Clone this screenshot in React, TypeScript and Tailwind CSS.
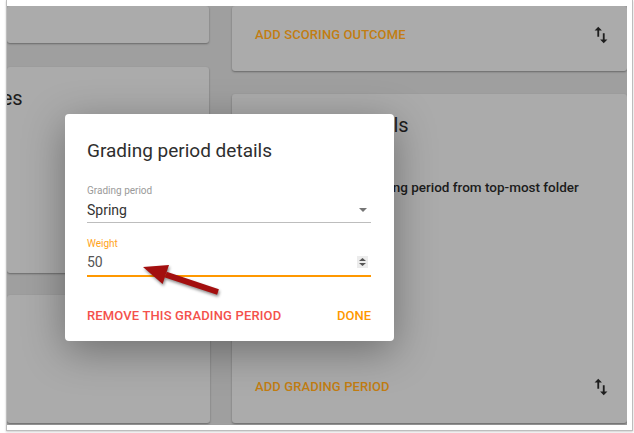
import React from "react";

function SwapIcon() {
  return (
    <svg width="22" height="22" viewBox="0 0 24 24" className="shrink-0">
      <path
        d="M16 17.01V10h-2v7.01h-3L15 21l4-3.99h-3zM9 3L5 6.99h3V14h2V6.99h3L9 3z"
        fill="#1e1e1e"
      />
    </svg>
  );
}

function Card({ className = "", children }: { className?: string; children?: React.ReactNode }) {
  return (
    <div className={`bg-[#ababab] rounded-[3px] shadow-[0_1px_2px_rgba(0,0,0,0.35)] ${className}`}>
      {children}
    </div>
  );
}

function PointerArrow() {
  // annotation arrow drawn over the screenshot
  return (
    <svg
      className="absolute left-0 top-0 pointer-events-none drop-shadow-[1px_2px_1.5px_rgba(0,0,0,0.45)]"
      width="634"
      height="433"
      viewBox="0 0 634 433"
    >
      <polygon points="218.9,289.2 217.1,294.8 164.9,277.4 166.7,271.8" fill="#a30f0f" />
      <polygon points="143,267 169,265 162.6,284.1" fill="#a30f0f" />
    </svg>
  );
}

export default function App() {
  return (
    <div
      className="relative w-[634px] h-[433px] bg-white overflow-hidden"
      style={{ fontFamily: "Roboto, 'Noto Sans', sans-serif" }}
    >
      <div className="ml-[6px] w-[627px] h-[431px] pt-[6px] border-x border-b border-[#bdbdbd] shadow-[0_1px_2px_rgba(0,0,0,0.2)]">
        <div className="relative w-[620px] h-[419px] overflow-hidden bg-[#9f9f9f]">
          <div className="flex gap-[23px] h-full">
            {/* left column */}
            <div className="w-[202px] shrink-0 flex flex-col">
              <Card className="h-[37px]" />
              <Card className="h-[206px] mt-[24px] pt-[19px] overflow-hidden">
                <div className="ml-[-76px] text-[20px] leading-[24px] text-[#1c1c1c] whitespace-nowrap">
                  Outcomes
                </div>
              </Card>
              <Card className="flex-1 mt-[22px] mb-[2px] w-[203px]" />
            </div>

            {/* right column */}
            <div className="flex-1 flex flex-col">
              <Card className="h-[65px] flex items-center justify-between pl-[23px] pr-[15px] pb-[8px]">
                <span className="text-[13px] font-medium text-[#c27d12] tracking-[0.1px]">
                  ADD SCORING OUTCOME
                </span>
                <SwapIcon />
              </Card>
              <Card className="flex-1 mt-[23px] mb-[2px] flex flex-col">
                <div className="pl-[31px] pt-[19px] text-[20px] leading-[24px] text-[#1c1c1c] whitespace-nowrap">
                  Outcome details
                </div>
                <div className="pl-[88px] mt-[41px] text-[13.5px] leading-[18px] font-medium text-[#1c1c1c] whitespace-nowrap">
                  Inherit grading period from top-most folder
                </div>
                <div className="mt-auto mb-[25px] flex items-center justify-between pl-[23px] pr-[15px]">
                  <span className="text-[13px] font-medium text-[#c27d12] tracking-[0.1px]">
                    ADD GRADING PERIOD
                  </span>
                  <SwapIcon />
                </div>
              </Card>
            </div>
          </div>

          {/* modal dialog */}
          <div className="absolute left-[58px] top-[108px] w-[329px] h-[227px] bg-white rounded-[4px] shadow-[0_10px_40px_rgba(0,0,0,0.35)] pl-[22px] pr-[23px] pt-[25px]">
            <div className="text-[19px] leading-[24px] text-[#2e2e2e]">Grading period details</div>

            <div className="mt-[22px]">
              <div className="text-[10px] leading-[12px] text-[#9a9a9a]">Grading period</div>
              <div className="flex items-center justify-between border-b border-[#bdbdbd] pb-[3px] mt-[4px]">
                <span className="text-[14px] leading-[18px] text-[#333]">Spring</span>
                <svg width="8" height="4" viewBox="0 0 8 4" className="mr-[4px]">
                  <polygon points="0,0 8,0 4,4" fill="#757575" />
                </svg>
              </div>
            </div>

            <div className="mt-[15px]">
              <div className="text-[10px] leading-[12px] text-[#ffa31a]">Weight</div>
              <div className="flex items-center justify-between border-b-2 border-[#ff9800] pb-[4px] mt-[3px]">
                <span className="text-[14px] leading-[18px] text-[#555]">50</span>
                <div className="w-[11px] h-[12px] bg-[#ececec] flex flex-col items-center justify-center gap-[2px] mr-[3px]">
                  <svg width="7" height="3" viewBox="0 0 7 3">
                    <polygon points="0,3 7,3 3.5,0" fill="#555" />
                  </svg>
                  <svg width="7" height="3" viewBox="0 0 7 3">
                    <polygon points="0,0 7,0 3.5,3" fill="#555" />
                  </svg>
                </div>
              </div>
            </div>

            <div className="mt-[31px] flex items-center justify-between">
              <button className="text-[13px] leading-[16px] font-medium text-[#f4514b] tracking-[0.15px]">
                REMOVE THIS GRADING PERIOD
              </button>
              <button className="text-[13px] leading-[16px] font-medium text-[#ff9800]">DONE</button>
            </div>
          </div>
        </div>
      </div>
      <PointerArrow />
    </div>
  );
}
